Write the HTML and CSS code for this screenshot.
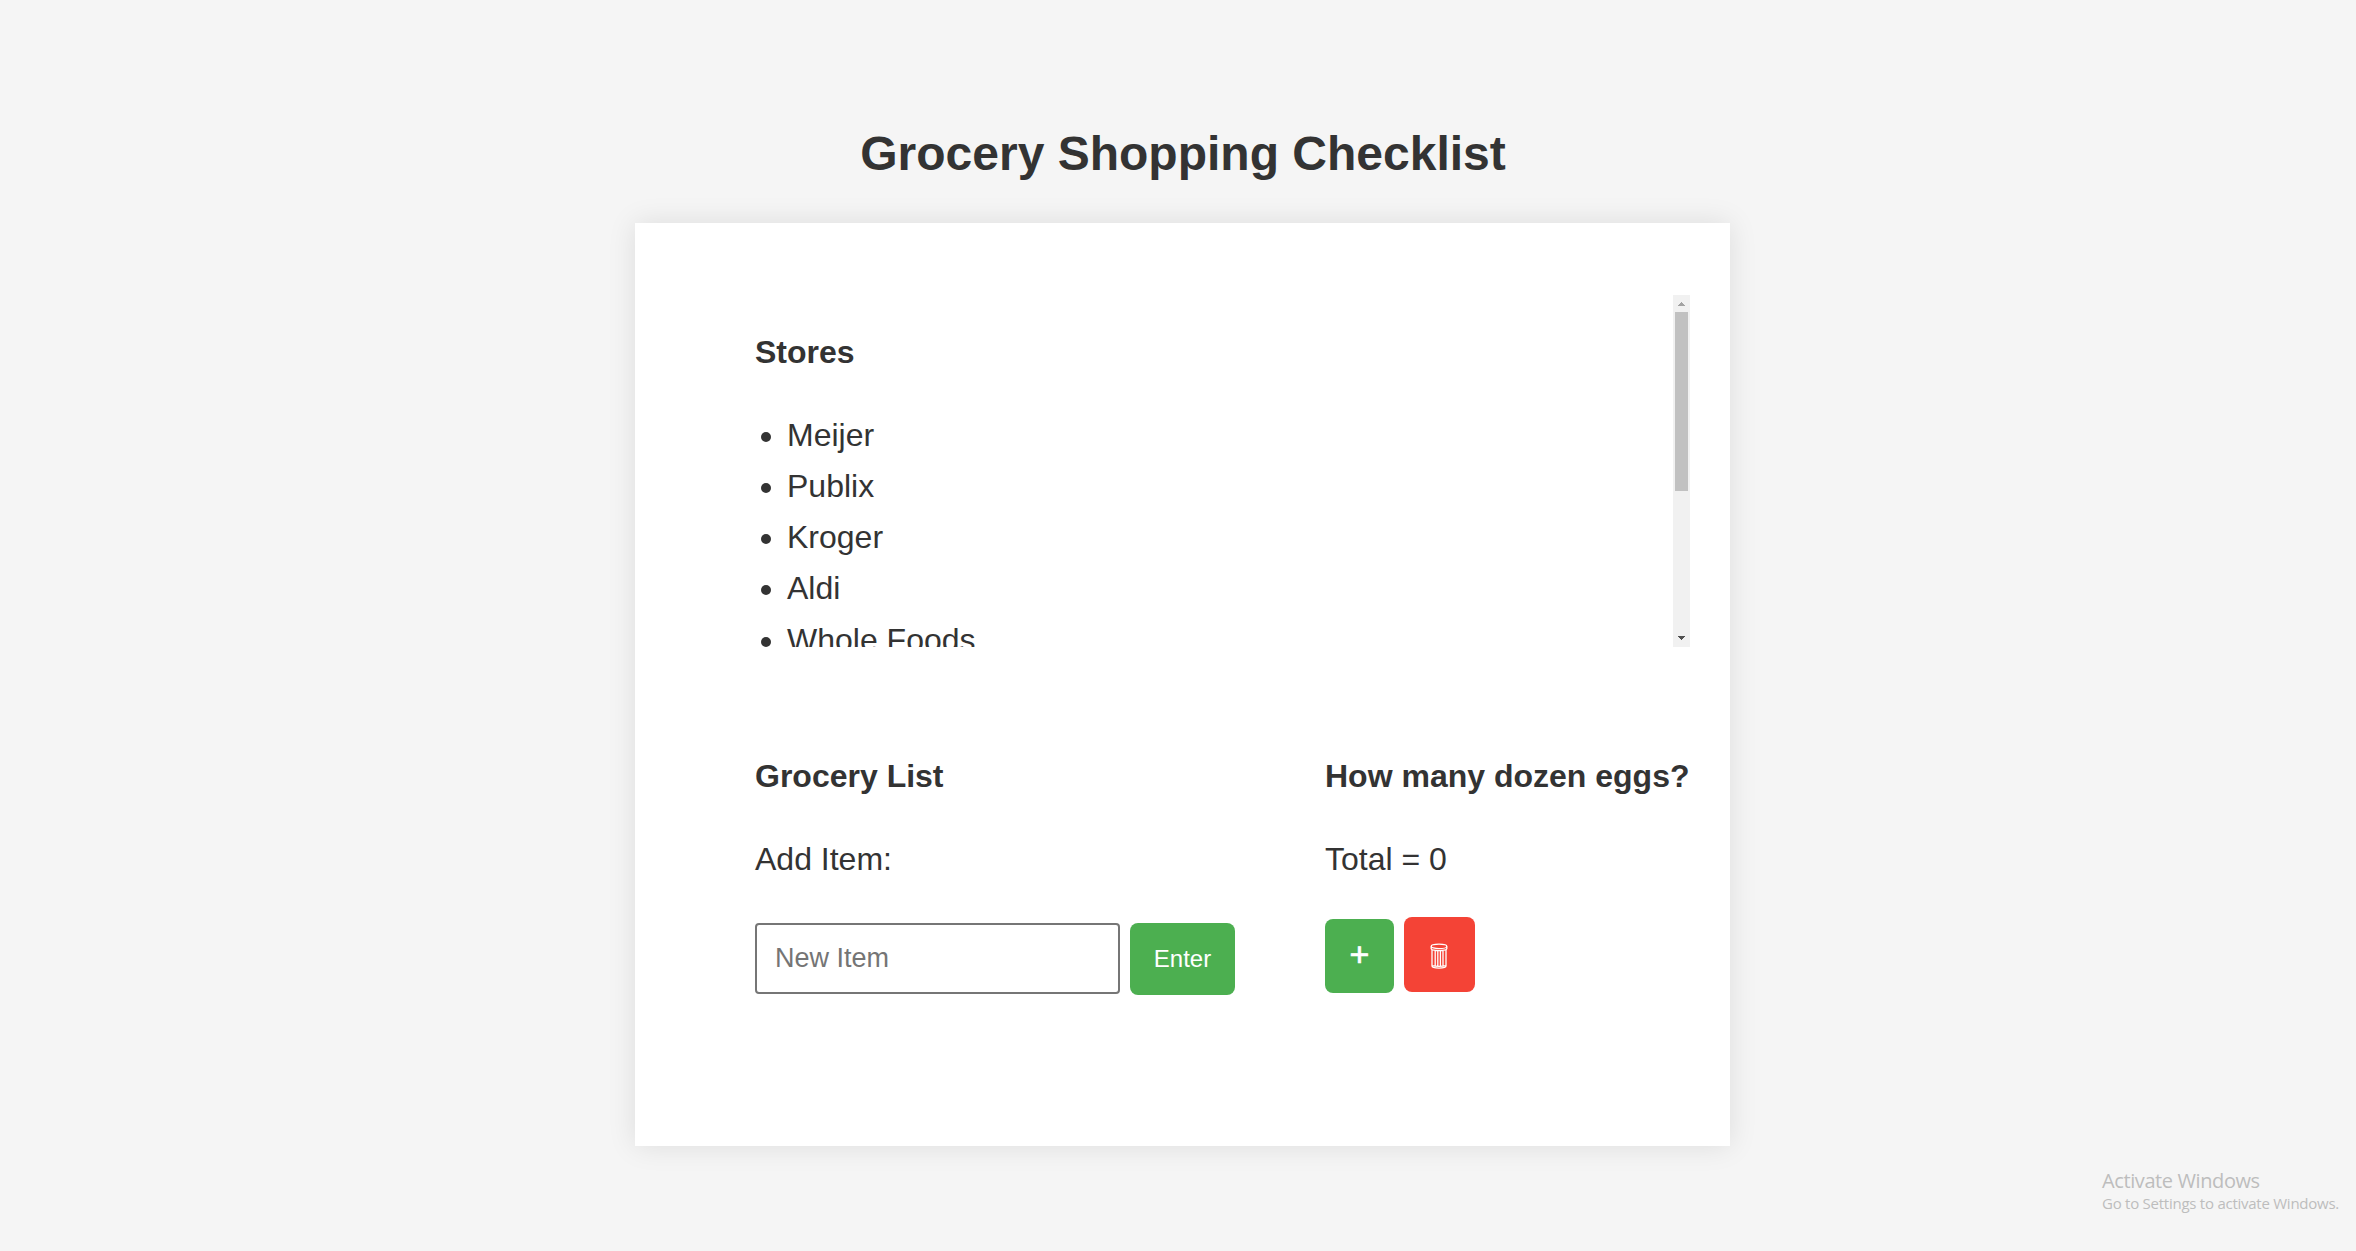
FILE: index.html
```html
<!DOCTYPE html>
<html lang="en">
<head>
<meta charset="utf-8">
<title>Grocery Shopping Checklist</title>
<link rel="stylesheet" href="styles.css">
</head>
<body>
<main class="page">
  <h1 class="title">Grocery Shopping Checklist</h1>
  <div class="card">
    <div class="stores">
      <section class="stores-view">
        <h2 class="heading">Stores</h2>
        <ul class="store-list">
          <li>Meijer</li>
          <li>Publix</li>
          <li>Kroger</li>
          <li>Aldi</li>
          <li>Whole Foods</li>
        </ul>
      </section>
      <div class="scrollbar">
        <svg class="arrow" width="17" height="17" viewBox="0 0 17 17" shape-rendering="crispEdges"><path d="M8 7h1v1h1v1h1v1h1v1H5v-1h1V9h1V8h1z" fill="#a3a3a3"/></svg>
        <div class="thumb"></div>
        <svg class="arrow arrow-down" width="17" height="17" viewBox="0 0 17 17" shape-rendering="crispEdges"><path d="M5 6h7v1h-1v1h-1v1H9v1H8V9H7V8H6V7H5z" fill="#505050"/></svg>
      </div>
    </div>
    <div class="columns">
      <section>
        <h2 class="heading">Grocery List</h2>
        <p class="label">Add Item:</p>
        <form class="add-form">
          <input class="item-input" type="text" placeholder="New Item">
          <button class="button enter" type="button">Enter</button>
        </form>
      </section>
      <section>
        <h2 class="heading">How many dozen eggs?</h2>
        <p class="label">Total = 0</p>
        <div class="egg-actions">
          <button class="button plus" type="button">+</button>
          <button class="button trash" type="button" aria-label="Clear">
            <svg width="18" height="26" viewBox="0 0 18 26" fill="none" stroke="#fff" stroke-width="1.3"><ellipse cx="9" cy="3.4" rx="7.8" ry="2.2"/><path d="M1.2 3.4v2.4c0 2.4 15.6 2.4 15.6 0V3.4M2 7v16c0 2.8 14 2.8 14 0V7M2.2 22.6c3 1 10.6 1 13.6 0M5.2 8v14.6M7.8 8.2v14.8M10.4 8.2v14.8M13 8v14.6"/></svg>
          </button>
        </div>
      </section>
    </div>
  </div>
</main>
<aside class="watermark">
  <div class="watermark-title">Activate Windows</div>
  <div class="watermark-text">Go to Settings to activate Windows.</div>
</aside>
</body>
</html>
```
FILE: styles.css
```css
* { box-sizing: border-box; }
body {
  margin: 0;
  min-height: 1251px;
  background: #f5f5f5;
  color: #333;
  font: 32px/1.6 Arial, "Liberation Sans", sans-serif;
  overflow: hidden;
}
.page {
  width: 1095px;
  margin-left: 635px;
  padding-top: 116px;
}
.title {
  margin: 0 0 30px;
  height: 77px;
  padding-left: 1px;
  font-size: 48px;
  text-align: center;
}
.card {
  height: 923px;
  padding: 72px 40px 0 120px;
  background: #fff;
  box-shadow: 0 0 27px rgba(0, 0, 0, .1);
}
.stores { display: flex; height: 352px; }
.stores-view { flex: 1; overflow: hidden; padding-top: 31.7px; }
.heading { margin: 0 0 32px; font-size: 32px; white-space: nowrap; }
.store-list { margin: 0; padding-left: 32px; }
.scrollbar {
  display: flex;
  flex-direction: column;
  align-items: center;
  width: 17px;
  background: #f1f1f1;
}
.arrow { display: block; flex: none; }
.arrow-down { margin-top: auto; }
.thumb { width: 13px; height: 179px; background: #c1c1c1; }
.columns {
  display: grid;
  grid-template-columns: 570px 365px;
  padding-top: 104px;
}
.label { margin: 0; }
.add-form { display: flex; gap: 10px; margin-top: 38px; align-items: flex-start; }
.item-input {
  width: 365px;
  height: 71px;
  padding: 0 18px;
  border: 2px solid #767676;
  border-radius: 4px;
  font: 27px Arial, "Liberation Sans", sans-serif;
}
.item-input::placeholder { color: #757575; }
.button {
  padding: 0;
  border: 0;
  border-radius: 8px;
  background: #4caf50;
  color: #fff;
  font: 24px Arial, "Liberation Sans", sans-serif;
}
.enter { width: 105px; height: 72px; }
.egg-actions { display: flex; gap: 10px; margin-top: 32px; align-items: flex-start; }
.plus {
  width: 69px;
  height: 74px;
  margin-top: 2px;
  padding-bottom: 3px;
  font-size: 34px;
  -webkit-text-stroke: .7px #fff;
}
.trash {
  display: flex;
  align-items: center;
  justify-content: center;
  width: 71px;
  height: 75px;
  padding: 3px 1px 0 0;
  background: #f44336;
}
.watermark {
  position: absolute;
  left: 2102px;
  top: 1167px;
  color: #bdbdbd;
  font-family: "Segoe UI", "Open Sans", sans-serif;
  white-space: nowrap;
}
.watermark-title { font-size: 20px; line-height: 27px; letter-spacing: -.4px; }
.watermark-text { font-size: 15px; line-height: 18px; letter-spacing: -.25px; }
```
